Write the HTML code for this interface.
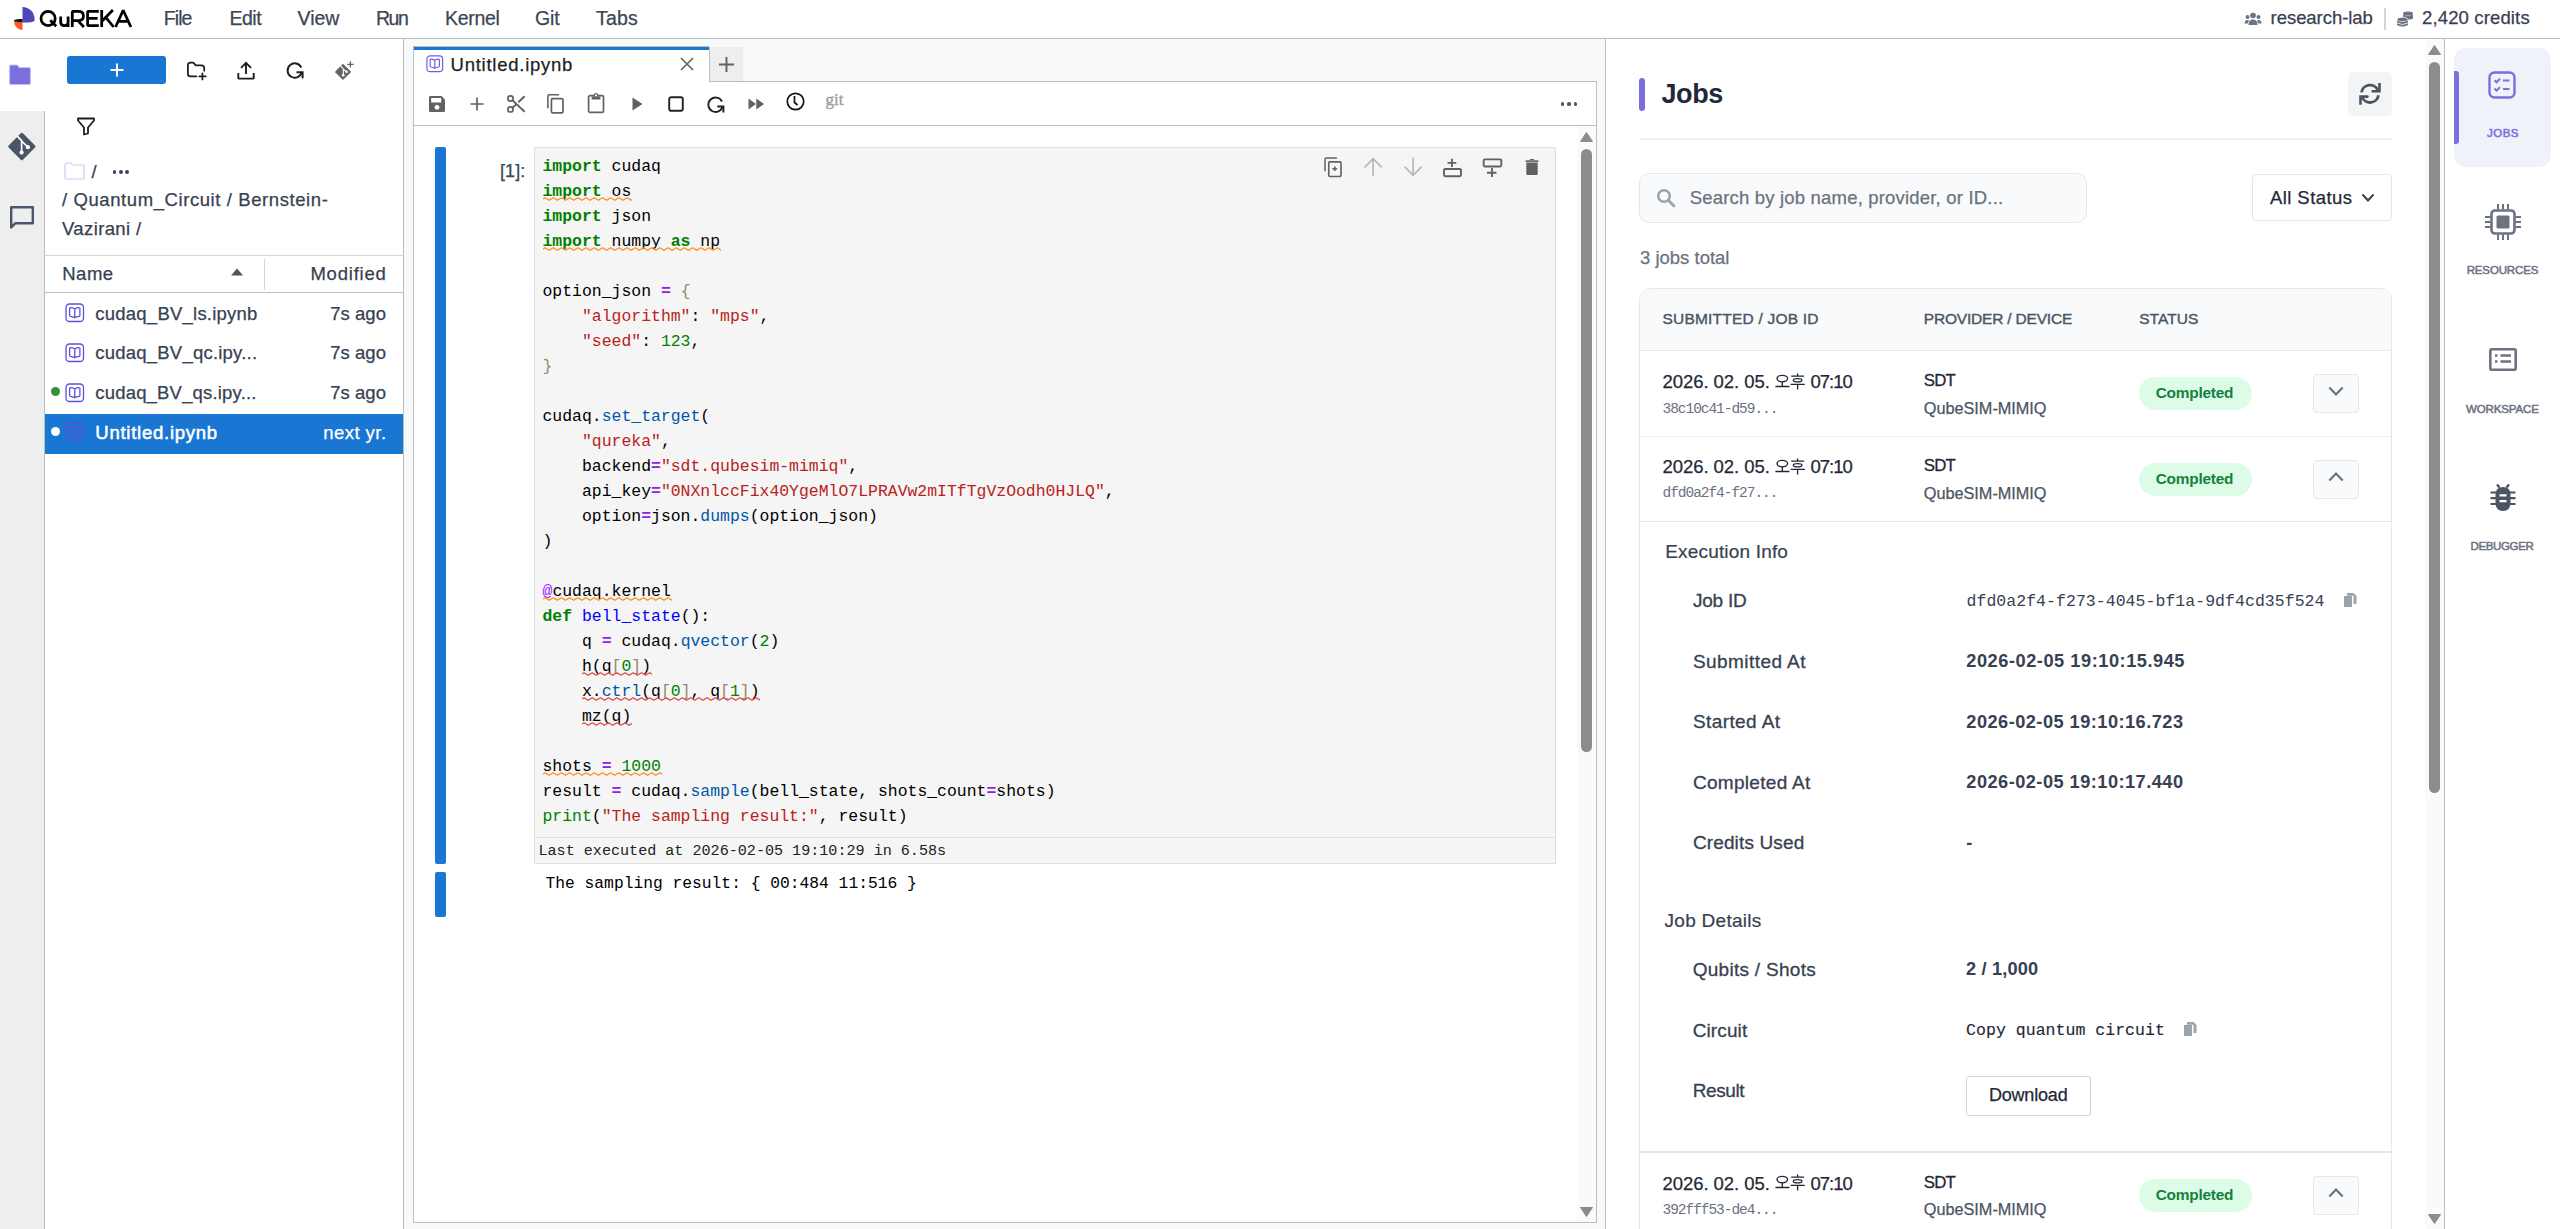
<!DOCTYPE html>
<html><head><meta charset="utf-8"><title>QuREKA</title>
<style>
html,body{margin:0;padding:0;}
body{width:2560px;height:1229px;overflow:hidden;position:relative;background:#fff;font-family:'Liberation Sans', sans-serif;}
.t{position:absolute;white-space:pre;}
.r{position:absolute;box-sizing:border-box;}
svg.r{overflow:visible;}
.ck{color:#008000;font-weight:700} .co{color:#9020e8;font-weight:700} .cs{color:#ba2121} .cn{color:#008000} .cp{color:#0055aa} .cd{color:#0000ff} .cb{color:#998866} .cbi{color:#008000} .cm{color:#aa22ff}
</style></head><body>
<div class="r" style="left:0px;top:38px;width:2560px;height:1px;background:#bdbdbd"></div>
<div class="r" style="left:0px;top:111px;width:44px;height:1118px;background:#eeeeee"></div>
<div class="r" style="left:44px;top:111px;width:1px;height:1118px;background:#bdbdbd"></div>
<div class="r" style="left:403px;top:39px;width:1px;height:1190px;background:#bdbdbd"></div>
<div class="r" style="left:404px;top:39px;width:1201px;height:1190px;background:#f8f9fb"></div>
<div class="r" style="left:413px;top:46px;width:1184px;height:1177px;background:#fff;border:1px solid #bdbdbd;"></div>
<div class="r" style="left:414px;top:47px;width:295px;height:3px;background:#1976d2"></div>
<div class="r" style="left:709px;top:46px;width:888px;height:35px;background:#f8f9fb"></div>
<div class="r" style="left:709px;top:47px;width:34px;height:34px;background:#eeeeee"></div>
<div class="r" style="left:709px;top:47px;width:1px;height:35px;background:#bdbdbd"></div>
<div class="r" style="left:709px;top:81px;width:888px;height:1px;background:#bdbdbd"></div>
<div class="r" style="left:413px;top:125px;width:1184px;height:1px;background:#bdbdbd"></div>
<div class="r" style="left:1596px;top:46px;width:1px;height:35px;background:#f8f9fb"></div>
<div class="r" style="left:1605px;top:39px;width:1px;height:1190px;background:#bdbdbd"></div>
<div class="r" style="left:2444px;top:39px;width:1px;height:1190px;background:#bdbdbd"></div>
<svg class="r" style="left:13px;top:6px;" width="23" height="24" viewBox="0 0 23 24">
<path d="M9.5 1 A12 12 0 0 1 21.5 13 L21.5 15 Q18 17 9.5 16.5 Z" fill="#4f46b8"/>
<path d="M9.5 16.5 L1 15.2 A9 9 0 0 0 9.5 24 Z" fill="#ff5722"/>
<path d="M1 14 Q5 12.5 9.5 13 L9.5 16.5 L1.5 15.5 Z" fill="#111"/>
</svg>
<svg class="r" style="left:0px;top:0px;" width="140" height="38" viewBox="0 0 140 38"><g fill="none" stroke="#000" stroke-width="2.75" stroke-linejoin="bevel">
<circle cx="48.1" cy="18.5" r="7.1"/><path d="M50.3 20.3 L56.2 26.3"/>
<path d="M60.7 16.5 V22.3 Q60.7 25.6 64.4 25.6 Q68.1 25.6 68.1 22.3 M68.1 16.5 V27"/>
<path d="M72.3 27 V11.4 H78.3 Q83.4 11.4 83.4 16 Q83.4 20.6 78.3 20.6 H72.3 M77.8 20.6 L83.9 27"/>
<path d="M98.8 11.4 H87.6 V25.6 H98.8 M87.6 18.4 H97.6"/>
<path d="M101.7 10 V27 M101.9 21.2 L112.9 10 M105.6 17.2 L113.6 27"/>
<path d="M115.6 27 L123.2 10.2 L130.9 27 M118.6 21.4 H127.8"/></g></svg>
<div class="t" style="left:163.75px;top:9.23px;font:400 19.5px/19.5px 'Liberation Sans', sans-serif;color:#3c4654;letter-spacing:-0.917px;;-webkit-text-stroke:0.25px #3c4654">File</div>
<div class="t" style="left:229.50px;top:9.23px;font:400 19.5px/19.5px 'Liberation Sans', sans-serif;color:#3c4654;letter-spacing:-0.5px;;-webkit-text-stroke:0.25px #3c4654">Edit</div>
<div class="t" style="left:297.50px;top:9.23px;font:400 19.5px/19.5px 'Liberation Sans', sans-serif;color:#3c4654;;-webkit-text-stroke:0.25px #3c4654">View</div>
<div class="t" style="left:376.00px;top:9.23px;font:400 19.5px/19.5px 'Liberation Sans', sans-serif;color:#3c4654;letter-spacing:-1.5px;;-webkit-text-stroke:0.25px #3c4654">Run</div>
<div class="t" style="left:445.00px;top:9.23px;font:400 19.5px/19.5px 'Liberation Sans', sans-serif;color:#3c4654;letter-spacing:-0.3px;;-webkit-text-stroke:0.25px #3c4654">Kernel</div>
<div class="t" style="left:535.00px;top:9.23px;font:400 19.5px/19.5px 'Liberation Sans', sans-serif;color:#3c4654;letter-spacing:-0.125px;;-webkit-text-stroke:0.25px #3c4654">Git</div>
<div class="t" style="left:596.00px;top:9.23px;font:400 19.5px/19.5px 'Liberation Sans', sans-serif;color:#3c4654;letter-spacing:0.167px;;-webkit-text-stroke:0.25px #3c4654">Tabs</div>
<div class="t" style="left:2270.60px;top:8.88px;font:400 18.5px/18.5px 'Liberation Sans', sans-serif;color:#374151;letter-spacing:-0.055px;;-webkit-text-stroke:0.25px #374151">research-lab</div>
<div class="r" style="left:2384px;top:8px;width:2px;height:22px;background:#d1d5db"></div>
<div class="t" style="left:2422.00px;top:8.88px;font:400 18.5px/18.5px 'Liberation Sans', sans-serif;color:#374151;letter-spacing:0.142px;;-webkit-text-stroke:0.25px #374151">2,420 credits</div>
<svg class="r" style="left:8px;top:64px;" width="24" height="21" viewBox="0 0 24 21"><path d="M1.5 2.5 Q1.5 1 3 1 L8.5 1 Q9.5 1 10.2 2 L11 3.5 L21 3.5 Q22.5 3.5 22.5 5 L22.5 19 Q22.5 20.5 21 20.5 L3 20.5 Q1.5 20.5 1.5 19 Z" fill="#7b6fe0" stroke="#c7c2f5" stroke-width="1.2"/></svg>
<svg class="r" style="left:7px;top:132px;" width="29" height="29" viewBox="0 0 29 29"><path d="M14.85 2.3 L27 14.5 L14.85 26.7 L2.7 14.5 Z" fill="#4a5568" stroke="#4a5568" stroke-width="3" stroke-linejoin="round"/>
<path d="M10 3.9 L14.6 8.6 V20.5 M14.6 9 L20.9 15.2" stroke="#fff" stroke-width="1.7" fill="none"/>
<circle cx="14.6" cy="20.6" r="2.1" fill="#fff"/><circle cx="20.9" cy="15.2" r="2.1" fill="#fff"/></svg>
<svg class="r" style="left:9px;top:205px;" width="26" height="25" viewBox="0 0 26 25"><path d="M2.2 2.2 L23.8 2.2 L23.8 18.3 L6.2 18.3 L2.2 22.5 Z" fill="none" stroke="#4a5568" stroke-width="2.4" stroke-linejoin="round"/></svg>
<div class="r" style="left:67px;top:56px;width:99px;height:28px;background:#1976d2;border-radius:3px"></div>
<svg class="r" style="left:110px;top:63px;" width="14" height="14" viewBox="0 0 14 14"><path d="M7 0.5 V13.5 M0.5 7 H13.5" stroke="#fff" stroke-width="2"/></svg>
<svg class="r" style="left:183px;top:57px;" width="30" height="28" viewBox="0 0 30 28"><path d="M13.4 19.4 H7.5 Q4.9 19.4 4.9 16.8 V8.3 Q4.9 5.7 7.5 5.7 H10.25 L12.75 8.4 H18.5 Q21.2 8.4 21.2 11 V13.7" fill="none" stroke="#1f1f1f" stroke-width="1.8" stroke-linecap="round" stroke-linejoin="round"/>
<path d="M19.4 16.3 V22.4 M16.3 19.4 H22.7" stroke="#1f1f1f" stroke-width="1.8" stroke-linecap="round"/></svg>
<svg class="r" style="left:237px;top:61px;" width="18" height="19" viewBox="0 0 18 19"><path d="M9 2 V13 M4 6.8 L9 1.8 L14 6.8" fill="none" stroke="#1f1f1f" stroke-width="1.9"/>
<path d="M1.3 12 V17 Q1.3 17.6 2 17.6 H16 Q16.7 17.6 16.7 17 V12" fill="none" stroke="#1f1f1f" stroke-width="1.9"/></svg>
<svg class="r" style="left:286px;top:61px;" width="18" height="19" viewBox="0 0 18 19"><path d="M15.3 6.5 A7.2 7.2 0 1 0 15.8 11" fill="none" stroke="#1f1f1f" stroke-width="1.9"/>
<path d="M10.5 11.3 L16.6 11.3 L16.6 17.2" fill="none" stroke="#1f1f1f" stroke-width="2"/></svg>
<svg class="r" style="left:334px;top:60px;" width="21" height="21" viewBox="0 0 21 21"><path d="M9 4.3 L16.6 11.9 L9 19.5 L1.4 11.9 Z" fill="#616161" stroke="#616161" stroke-width="1" stroke-linejoin="round"/>
<path d="M6.6 5.9 L9.3 8.9 V15 M9.3 9.2 L12.5 11.8" stroke="#fff" stroke-width="1.1" fill="none"/>
<circle cx="9.2" cy="15.2" r="1.35" fill="#fff"/><circle cx="12.5" cy="11.8" r="1.35" fill="#fff"/>
<path d="M16.4 1.2 V7.6 M13.2 4.4 H19.6" stroke="#616161" stroke-width="1.3"/></svg>
<svg class="r" style="left:77px;top:117px;" width="18" height="19" viewBox="0 0 18 19"><path d="M1 1.5 H17 V3.5 L11 10.5 V16.5 L7 17.5 V10.5 L1 3.5 Z" fill="none" stroke="#1f1f1f" stroke-width="1.8" stroke-linejoin="round"/></svg>
<svg class="r" style="left:64px;top:162px;" width="21" height="18" viewBox="0 0 21 18"><path d="M1 2.5 Q1 1 2.5 1 L7 1 L8.5 3 L18.5 3 Q20 3 20 4.5 L20 15.5 Q20 17 18.5 17 L2.5 17 Q1 17 1 15.5 Z" fill="none" stroke="#c9cdf5" stroke-width="1.2"/></svg>
<div class="t" style="left:91.50px;top:163.08px;font:400 18.5px/18.5px 'Liberation Sans', sans-serif;color:#374151;;-webkit-text-stroke:0.25px #374151">/</div>
<div class="r" style="left:112.69999999999999px;top:170.1px;width:3.8px;height:3.8px;background:#3b4656;border-radius:50%"></div>
<div class="r" style="left:119.0px;top:170.1px;width:3.8px;height:3.8px;background:#3b4656;border-radius:50%"></div>
<div class="r" style="left:125.3px;top:170.1px;width:3.8px;height:3.8px;background:#3b4656;border-radius:50%"></div>
<div class="t" style="left:62.00px;top:191.08px;font:400 18.5px/18.5px 'Liberation Sans', sans-serif;color:#374151;letter-spacing:0.586px;;-webkit-text-stroke:0.25px #374151">/ Quantum_Circuit / Bernstein-</div>
<div class="t" style="left:62.00px;top:219.58px;font:400 18.5px/18.5px 'Liberation Sans', sans-serif;color:#374151;letter-spacing:0.378px;;-webkit-text-stroke:0.25px #374151">Vazirani /</div>
<div class="r" style="left:45px;top:255px;width:358px;height:1px;background:#d6d6d6"></div>
<div class="r" style="left:45px;top:292px;width:358px;height:1px;background:#bdbdbd"></div>
<div class="r" style="left:264px;top:259px;width:1px;height:31px;background:#d6d6d6"></div>
<div class="t" style="left:62.30px;top:265.38px;font:400 18.5px/18.5px 'Liberation Sans', sans-serif;color:#374151;letter-spacing:0.467px;;-webkit-text-stroke:0.25px #374151">Name</div>
<svg class="r" style="left:231px;top:268px;" width="12" height="8" viewBox="0 0 12 8"><path d="M0 7.5 L6 0.5 L12 7.5 Z" fill="#555"/></svg>
<div class="t" style="left:310.40px;top:265.38px;font:400 18.5px/18.5px 'Liberation Sans', sans-serif;color:#374151;letter-spacing:0.786px;;-webkit-text-stroke:0.25px #374151">Modified</div>
<div class="r" style="left:45px;top:414px;width:358px;height:40px;background:#1976d2"></div>
<svg class="r" style="left:65px;top:303px;" width="20" height="20" viewBox="0 0 20 20"><rect x="1" y="1" width="17.5" height="17.5" rx="3.5" fill="none" stroke="#5b4fd9" stroke-width="1.3"/>
<path d="M4.6 5.5 Q4.6 4.6 5.6 4.6 Q7.6 4.6 9.75 5.8 Q11.9 4.6 13.9 4.6 Q14.9 4.6 14.9 5.5 V12.2 Q14.9 13.1 13.9 13.3 Q11.8 13.6 9.75 14.8 Q7.7 13.6 5.6 13.3 Q4.6 13.1 4.6 12.2 Z M9.75 5.8 V14.6" fill="none" stroke="#5b4fd9" stroke-width="1.3" stroke-linejoin="round"/></svg>
<div class="t" style="left:95.30px;top:305.38px;font:400 18.5px/18.5px 'Liberation Sans', sans-serif;color:#374151;letter-spacing:0.231px;;-webkit-text-stroke:0.25px #374151">cudaq_BV_ls.ipynb</div>
<div class="t" style="left:330.20px;top:305.38px;font:400 18.5px/18.5px 'Liberation Sans', sans-serif;color:#374151;letter-spacing:0.04px;;-webkit-text-stroke:0.25px #374151">7s ago</div>
<svg class="r" style="left:65px;top:343px;" width="20" height="20" viewBox="0 0 20 20"><rect x="1" y="1" width="17.5" height="17.5" rx="3.5" fill="none" stroke="#5b4fd9" stroke-width="1.3"/>
<path d="M4.6 5.5 Q4.6 4.6 5.6 4.6 Q7.6 4.6 9.75 5.8 Q11.9 4.6 13.9 4.6 Q14.9 4.6 14.9 5.5 V12.2 Q14.9 13.1 13.9 13.3 Q11.8 13.6 9.75 14.8 Q7.7 13.6 5.6 13.3 Q4.6 13.1 4.6 12.2 Z M9.75 5.8 V14.6" fill="none" stroke="#5b4fd9" stroke-width="1.3" stroke-linejoin="round"/></svg>
<div class="t" style="left:95.30px;top:344.47px;font:400 18.5px/18.5px 'Liberation Sans', sans-serif;color:#374151;letter-spacing:0.218px;;-webkit-text-stroke:0.25px #374151">cudaq_BV_qc.ipy...</div>
<div class="t" style="left:330.20px;top:344.47px;font:400 18.5px/18.5px 'Liberation Sans', sans-serif;color:#374151;letter-spacing:0.04px;;-webkit-text-stroke:0.25px #374151">7s ago</div>
<svg class="r" style="left:65px;top:383px;" width="20" height="20" viewBox="0 0 20 20"><rect x="1" y="1" width="17.5" height="17.5" rx="3.5" fill="none" stroke="#5b4fd9" stroke-width="1.3"/>
<path d="M4.6 5.5 Q4.6 4.6 5.6 4.6 Q7.6 4.6 9.75 5.8 Q11.9 4.6 13.9 4.6 Q14.9 4.6 14.9 5.5 V12.2 Q14.9 13.1 13.9 13.3 Q11.8 13.6 9.75 14.8 Q7.7 13.6 5.6 13.3 Q4.6 13.1 4.6 12.2 Z M9.75 5.8 V14.6" fill="none" stroke="#5b4fd9" stroke-width="1.3" stroke-linejoin="round"/></svg>
<div class="r" style="left:51px;top:386.5px;width:9px;height:9px;background:#388e3c;border-radius:50%"></div>
<div class="t" style="left:95.30px;top:384.07px;font:400 18.5px/18.5px 'Liberation Sans', sans-serif;color:#374151;letter-spacing:0.182px;;-webkit-text-stroke:0.25px #374151">cudaq_BV_qs.ipy...</div>
<div class="t" style="left:330.20px;top:384.07px;font:400 18.5px/18.5px 'Liberation Sans', sans-serif;color:#374151;letter-spacing:0.04px;;-webkit-text-stroke:0.25px #374151">7s ago</div>
<svg class="r" style="left:65px;top:422px;" width="20" height="20" viewBox="0 0 20 20"><rect x="1" y="1" width="17.5" height="17.5" rx="3.5" fill="none" stroke="#5b4fd9" stroke-width="1.3"/>
<path d="M4.6 5.5 Q4.6 4.6 5.6 4.6 Q7.6 4.6 9.75 5.8 Q11.9 4.6 13.9 4.6 Q14.9 4.6 14.9 5.5 V12.2 Q14.9 13.1 13.9 13.3 Q11.8 13.6 9.75 14.8 Q7.7 13.6 5.6 13.3 Q4.6 13.1 4.6 12.2 Z M9.75 5.8 V14.6" fill="none" stroke="#5b4fd9" stroke-width="1.3" stroke-linejoin="round"/></svg>
<div class="r" style="left:51px;top:427.2px;width:9px;height:9px;background:#fff;border-radius:50%"></div>
<div class="t" style="left:95.30px;top:423.77px;font:400 18.5px/18.5px 'Liberation Sans', sans-serif;color:#fff;letter-spacing:0.746px;-webkit-text-stroke:0.55px #fff">Untitled.ipynb</div>
<div class="t" style="left:323.20px;top:423.77px;font:400 18.5px/18.5px 'Liberation Sans', sans-serif;color:#fff;letter-spacing:0.457px;;-webkit-text-stroke:0.25px #fff">next yr.</div>
<svg class="r" style="left:425.5px;top:54.5px;transform:scale(0.9);transform-origin:0 0" width="20" height="20" viewBox="0 0 20 20"><rect x="1" y="1" width="17.5" height="17.5" rx="3.5" fill="none" stroke="#6a5fe0" stroke-width="1.3"/>
<path d="M4.6 5.5 Q4.6 4.6 5.6 4.6 Q7.6 4.6 9.75 5.8 Q11.9 4.6 13.9 4.6 Q14.9 4.6 14.9 5.5 V12.2 Q14.9 13.1 13.9 13.3 Q11.8 13.6 9.75 14.8 Q7.7 13.6 5.6 13.3 Q4.6 13.1 4.6 12.2 Z M9.75 5.8 V14.6" fill="none" stroke="#6a5fe0" stroke-width="1.3" stroke-linejoin="round"/></svg>
<div class="t" style="left:450.60px;top:55.57px;font:400 18.5px/18.5px 'Liberation Sans', sans-serif;color:#1f1f1f;letter-spacing:0.746px;;-webkit-text-stroke:0.25px #1f1f1f">Untitled.ipynb</div>
<svg class="r" style="left:680px;top:57px;" width="14" height="14" viewBox="0 0 14 14"><path d="M1 1 L13 13 M13 1 L1 13" stroke="#616161" stroke-width="1.6"/></svg>
<svg class="r" style="left:718px;top:56px;" width="18" height="18" viewBox="0 0 18 18"><path d="M8.5 1 V16 M1 8.5 H16" stroke="#616161" stroke-width="1.9"/></svg>
<svg class="r" style="left:428px;top:95px;" width="18" height="18" viewBox="0 0 18 18"><path d="M1 2.2 Q1 1 2.2 1 L13.5 1 L17 4.5 L17 15.8 Q17 17 15.8 17 L2.2 17 Q1 17 1 15.8 Z" fill="#616161"/><rect x="3.2" y="3" width="10" height="4.5" fill="#fff"/><circle cx="9" cy="12.3" r="2.4" fill="#fff"/></svg>
<svg class="r" style="left:470px;top:97px;" width="14" height="14" viewBox="0 0 14 14"><path d="M7 0.5 V13.5 M0.5 7 H13.5" stroke="#616161" stroke-width="1.7"/></svg>
<svg class="r" style="left:500px;top:88px;" width="30" height="30" viewBox="0 0 30 30"><circle cx="10.5" cy="10.5" r="2.6" fill="none" stroke="#616161" stroke-width="1.7"/><circle cx="10.5" cy="21.4" r="2.6" fill="none" stroke="#616161" stroke-width="1.7"/><path d="M12.6 12.4 L24.6 23.8 M24.6 8.2 L18.3 14.3 M16.2 16.4 L12.6 19.6" stroke="#616161" stroke-width="1.9"/></svg>
<svg class="r" style="left:540px;top:88px;" width="30" height="30" viewBox="0 0 30 30"><path d="M7.9 20.2 V8.2 Q7.9 6.8 9.3 6.8 H19" fill="none" stroke="#616161" stroke-width="1.6"/><rect x="11.4" y="10.6" width="11.6" height="14.3" rx="1.4" fill="none" stroke="#616161" stroke-width="1.7"/></svg>
<svg class="r" style="left:587px;top:93px;" width="18" height="22" viewBox="0 0 18 22"><rect x="1.6" y="2.7" width="14.9" height="16.6" rx="1.4" fill="none" stroke="#616161" stroke-width="1.7"/><path d="M4.6 3.5 H13.4 V6.5 H4.6 Z" fill="#616161"/><circle cx="9" cy="2.4" r="1.7" fill="#fff" stroke="#616161" stroke-width="1.3"/></svg>
<svg class="r" style="left:632px;top:97px;" width="11" height="14" viewBox="0 0 11 14"><path d="M0.5 0.5 L10.5 7 L0.5 13.5 Z" fill="#616161"/></svg>
<svg class="r" style="left:668px;top:96px;" width="16" height="16" viewBox="0 0 16 16"><rect x="1.2" y="1.2" width="13.6" height="13.6" rx="2" fill="none" stroke="#222" stroke-width="1.9"/></svg>
<svg class="r" style="left:707px;top:95px;" width="18" height="19" viewBox="0 0 18 19"><path d="M15 6.5 A7.2 7.2 0 1 0 15.6 11.3" fill="none" stroke="#222" stroke-width="1.9"/><path d="M10.3 11.5 L16.4 11.5 L16.4 17.5" fill="none" stroke="#222" stroke-width="2"/></svg>
<svg class="r" style="left:748px;top:98px;" width="17" height="12" viewBox="0 0 17 12"><path d="M0.5 0.5 L8 6 L0.5 11.5 Z M8.3 0.5 L16 6 L8.3 11.5 Z" fill="#616161"/></svg>
<svg class="r" style="left:786px;top:92px;" width="19" height="19" viewBox="0 0 19 19"><circle cx="9.5" cy="9.5" r="8.2" fill="none" stroke="#111" stroke-width="1.7"/><path d="M8.5 4 V10.5 L11.5 13" fill="none" stroke="#111" stroke-width="1.7"/></svg>
<div class="t" style="left:825.50px;top:90.87px;font:400 17px/17px 'Liberation Serif', serif;color:#9e9e9e;-webkit-text-stroke:0.4px #9e9e9e">git</div>
<div class="r" style="left:1560.65px;top:102.25px;width:3.7px;height:3.7px;background:#555;border-radius:50%"></div>
<div class="r" style="left:1567.15px;top:102.25px;width:3.7px;height:3.7px;background:#555;border-radius:50%"></div>
<div class="r" style="left:1573.5500000000002px;top:102.25px;width:3.7px;height:3.7px;background:#555;border-radius:50%"></div>
<div class="r" style="left:435px;top:147px;width:11px;height:717px;background:#1976d2;border-radius:2px"></div>
<div class="r" style="left:435px;top:872px;width:11px;height:45px;background:#1976d2;border-radius:2px"></div>
<div class="t" style="left:500.00px;top:161.50px;font:400 18px/18px 'Liberation Sans', sans-serif;color:#3b4656;letter-spacing:0.1px;;-webkit-text-stroke:0.25px #3b4656">[1]:</div>
<div class="r" style="left:534px;top:147px;width:1022px;height:717px;background:#f5f5f5;border:1px solid #e0e0e0"></div>
<div class="r" style="left:535px;top:837px;width:1020px;height:1px;background:#e0e0e0"></div>
<svg class="r" style="left:1323px;top:156px;" width="20" height="22" viewBox="0 0 20 22"><path d="M2 15.2 V3.2 Q2 2 3.2 2 H13.9" fill="none" stroke="#616161" stroke-width="1.5"/><rect x="5.75" y="5.9" width="12.25" height="14.6" rx="1.2" fill="none" stroke="#616161" stroke-width="1.6"/><path d="M11.75 10.4 V15.1 M9.4 12.75 H14.1" stroke="#616161" stroke-width="1.6"/></svg>
<svg class="r" style="left:1363px;top:157px;" width="20" height="20" viewBox="0 0 20 20"><path d="M10.1 19.3 V1.8 M1.5 10.3 L10.1 1.6 L18.7 10.3" fill="none" stroke="#b8b8b8" stroke-width="1.7"/></svg>
<svg class="r" style="left:1403px;top:157px;" width="20" height="20" viewBox="0 0 20 20"><path d="M10.1 0.7 V18.2 M1.5 9.7 L10.1 18.4 L18.7 9.7" fill="none" stroke="#b8b8b8" stroke-width="1.7"/></svg>
<svg class="r" style="left:1442px;top:157px;" width="20" height="21" viewBox="0 0 20 21"><rect x="2" y="12" width="17" height="7.3" rx="1.2" fill="none" stroke="#616161" stroke-width="1.9"/><path d="M9.9 1.7 V10 M5.5 5.9 H14.3" stroke="#616161" stroke-width="1.9"/></svg>
<svg class="r" style="left:1482px;top:157px;" width="20" height="21" viewBox="0 0 20 21"><rect x="1.7" y="2.4" width="17.6" height="7.1" rx="1.2" fill="none" stroke="#616161" stroke-width="1.9"/><path d="M10 11 V19.9 M5 15.75 H14.5" stroke="#616161" stroke-width="1.9"/></svg>
<svg class="r" style="left:1525px;top:158px;" width="14" height="18" viewBox="0 0 14 18"><path d="M0.6 2.3 H13.4 V3.9 H0.6 Z" fill="#616161"/><path d="M4.6 2.3 Q4.6 0.9 6 0.9 H8 Q9.4 0.9 9.4 2.3" fill="#616161"/><path d="M1.3 4.5 H12.7 V15.8 Q12.7 17 11.5 17 H2.5 Q1.3 17 1.3 15.8 Z" fill="#616161"/></svg>
<div class="r" style="left:1577px;top:126px;width:19px;height:1096px;background:#fafafa"></div>
<svg class="r" style="left:1580px;top:132px;" width="13" height="10" viewBox="0 0 13 10"><path d="M6.5 0.5 L12.5 9.5 H0.5 Z" fill="#8c8c8c" stroke="#8c8c8c" stroke-width="1" stroke-linejoin="round"/></svg>
<div class="r" style="left:1581px;top:148.5px;width:11px;height:603.5px;background:#8c8c8c;border-radius:6px"></div>
<svg class="r" style="left:1580px;top:1207px;" width="13" height="10" viewBox="0 0 13 10"><path d="M6.5 9.5 L12.5 0.5 H0.5 Z" fill="#8c8c8c" stroke="#8c8c8c" stroke-width="1" stroke-linejoin="round"/></svg>
<div class="t code" style="left:542.5px;top:153.82px;font:400 16.45px/25px 'Liberation Mono', monospace;color:#000"><span class="ck">import</span> cudaq
<span class="ck">import</span> os
<span class="ck">import</span> json
<span class="ck">import</span> numpy <span class="ck">as</span> np

option_json <span class="co">=</span> <span class="cb">{</span>
    <span class="cs">&quot;algorithm&quot;</span>: <span class="cs">&quot;mps&quot;</span>,
    <span class="cs">&quot;seed&quot;</span>: <span class="cn">123</span>,
<span class="cb">}</span>

cudaq.<span class="cp">set_target</span>(
    <span class="cs">&quot;qureka&quot;</span>,
    backend<span class="co">=</span><span class="cs">&quot;sdt.qubesim-mimiq&quot;</span>,
    api_key<span class="co">=</span><span class="cs">&quot;0NXnlccFix40YgeMlO7LPRAVw2mITfTgVzOodh0HJLQ&quot;</span>,
    option<span class="co">=</span>json.<span class="cp">dumps</span>(option_json)
)

<span class="cm">@</span>cudaq.kernel
<span class="ck">def</span> <span class="cd">bell_state</span>():
    q <span class="co">=</span> cudaq.<span class="cp">qvector</span>(<span class="cn">2</span>)
    h(q<span class="cb">[</span><span class="cn">0</span><span class="cb">]</span>)
    x.<span class="cp">ctrl</span>(q<span class="cb">[</span><span class="cn">0</span><span class="cb">]</span>, q<span class="cb">[</span><span class="cn">1</span><span class="cb">]</span>)
    mz(q)

shots <span class="co">=</span> <span class="cn">1000</span>
result <span class="co">=</span> cudaq.<span class="cp">sample</span>(bell_state, shots_count<span class="co">=</span>shots)
<span class="cbi">print</span>(<span class="cs">&quot;The sampling result:&quot;</span>, result)</div>
<svg class="r" style="left:542.5px;top:197.2px;overflow:hidden" width="89" height="5" viewBox="0 0 89 5"><polyline points="0.00,2.05 2.05,0.8 4.10,2.05 6.15,3.3 8.20,2.05 10.25,0.8 12.30,2.05 14.35,3.3 16.40,2.05 18.45,0.8 20.50,2.05 22.55,3.3 24.60,2.05 26.65,0.8 28.70,2.05 30.75,3.3 32.80,2.05 34.85,0.8 36.90,2.05 38.95,3.3 41.00,2.05 43.05,0.8 45.10,2.05 47.15,3.3 49.20,2.05 51.25,0.8 53.30,2.05 55.35,3.3 57.40,2.05 59.45,0.8 61.50,2.05 63.55,3.3 65.60,2.05 67.65,0.8 69.70,2.05 71.75,3.3 73.80,2.05 75.85,0.8 77.90,2.05 79.95,3.3 82.00,2.05 84.05,0.8 86.10,2.05 88.15,3.3 90.20,2.05" fill="none" stroke="#ff8c1a" stroke-width="1.3" stroke-linejoin="round"/></svg>
<svg class="r" style="left:542.5px;top:247.2px;overflow:hidden" width="178" height="5" viewBox="0 0 178 5"><polyline points="0.00,2.05 2.05,0.8 4.10,2.05 6.15,3.3 8.20,2.05 10.25,0.8 12.30,2.05 14.35,3.3 16.40,2.05 18.45,0.8 20.50,2.05 22.55,3.3 24.60,2.05 26.65,0.8 28.70,2.05 30.75,3.3 32.80,2.05 34.85,0.8 36.90,2.05 38.95,3.3 41.00,2.05 43.05,0.8 45.10,2.05 47.15,3.3 49.20,2.05 51.25,0.8 53.30,2.05 55.35,3.3 57.40,2.05 59.45,0.8 61.50,2.05 63.55,3.3 65.60,2.05 67.65,0.8 69.70,2.05 71.75,3.3 73.80,2.05 75.85,0.8 77.90,2.05 79.95,3.3 82.00,2.05 84.05,0.8 86.10,2.05 88.15,3.3 90.20,2.05 92.25,0.8 94.30,2.05 96.35,3.3 98.40,2.05 100.45,0.8 102.50,2.05 104.55,3.3 106.60,2.05 108.65,0.8 110.70,2.05 112.75,3.3 114.80,2.05 116.85,0.8 118.90,2.05 120.95,3.3 123.00,2.05 125.05,0.8 127.10,2.05 129.15,3.3 131.20,2.05 133.25,0.8 135.30,2.05 137.35,3.3 139.40,2.05 141.45,0.8 143.50,2.05 145.55,3.3 147.60,2.05 149.65,0.8 151.70,2.05 153.75,3.3 155.80,2.05 157.85,0.8 159.90,2.05 161.95,3.3 164.00,2.05 166.05,0.8 168.10,2.05 170.15,3.3 172.20,2.05 174.25,0.8 176.30,2.05 178.35,3.3 180.40,2.05" fill="none" stroke="#ff8c1a" stroke-width="1.3" stroke-linejoin="round"/></svg>
<svg class="r" style="left:542.5px;top:597.2px;overflow:hidden" width="129" height="5" viewBox="0 0 129 5"><polyline points="0.00,2.05 2.05,0.8 4.10,2.05 6.15,3.3 8.20,2.05 10.25,0.8 12.30,2.05 14.35,3.3 16.40,2.05 18.45,0.8 20.50,2.05 22.55,3.3 24.60,2.05 26.65,0.8 28.70,2.05 30.75,3.3 32.80,2.05 34.85,0.8 36.90,2.05 38.95,3.3 41.00,2.05 43.05,0.8 45.10,2.05 47.15,3.3 49.20,2.05 51.25,0.8 53.30,2.05 55.35,3.3 57.40,2.05 59.45,0.8 61.50,2.05 63.55,3.3 65.60,2.05 67.65,0.8 69.70,2.05 71.75,3.3 73.80,2.05 75.85,0.8 77.90,2.05 79.95,3.3 82.00,2.05 84.05,0.8 86.10,2.05 88.15,3.3 90.20,2.05 92.25,0.8 94.30,2.05 96.35,3.3 98.40,2.05 100.45,0.8 102.50,2.05 104.55,3.3 106.60,2.05 108.65,0.8 110.70,2.05 112.75,3.3 114.80,2.05 116.85,0.8 118.90,2.05 120.95,3.3 123.00,2.05 125.05,0.8 127.10,2.05 129.15,3.3 131.20,2.05" fill="none" stroke="#ff8c1a" stroke-width="1.3" stroke-linejoin="round"/></svg>
<svg class="r" style="left:542.5px;top:772.2px;overflow:hidden" width="119" height="5" viewBox="0 0 119 5"><polyline points="0.00,2.05 2.05,0.8 4.10,2.05 6.15,3.3 8.20,2.05 10.25,0.8 12.30,2.05 14.35,3.3 16.40,2.05 18.45,0.8 20.50,2.05 22.55,3.3 24.60,2.05 26.65,0.8 28.70,2.05 30.75,3.3 32.80,2.05 34.85,0.8 36.90,2.05 38.95,3.3 41.00,2.05 43.05,0.8 45.10,2.05 47.15,3.3 49.20,2.05 51.25,0.8 53.30,2.05 55.35,3.3 57.40,2.05 59.45,0.8 61.50,2.05 63.55,3.3 65.60,2.05 67.65,0.8 69.70,2.05 71.75,3.3 73.80,2.05 75.85,0.8 77.90,2.05 79.95,3.3 82.00,2.05 84.05,0.8 86.10,2.05 88.15,3.3 90.20,2.05 92.25,0.8 94.30,2.05 96.35,3.3 98.40,2.05 100.45,0.8 102.50,2.05 104.55,3.3 106.60,2.05 108.65,0.8 110.70,2.05 112.75,3.3 114.80,2.05 116.85,0.8 118.90,2.05 120.95,3.3 123.00,2.05" fill="none" stroke="#ff8c1a" stroke-width="1.3" stroke-linejoin="round"/></svg>
<svg class="r" style="left:582.0px;top:672.2px;overflow:hidden" width="70" height="5" viewBox="0 0 70 5"><polyline points="0.00,2.05 2.05,0.8 4.10,2.05 6.15,3.3 8.20,2.05 10.25,0.8 12.30,2.05 14.35,3.3 16.40,2.05 18.45,0.8 20.50,2.05 22.55,3.3 24.60,2.05 26.65,0.8 28.70,2.05 30.75,3.3 32.80,2.05 34.85,0.8 36.90,2.05 38.95,3.3 41.00,2.05 43.05,0.8 45.10,2.05 47.15,3.3 49.20,2.05 51.25,0.8 53.30,2.05 55.35,3.3 57.40,2.05 59.45,0.8 61.50,2.05 63.55,3.3 65.60,2.05 67.65,0.8 69.70,2.05 71.75,3.3 73.80,2.05" fill="none" stroke="#e04848" stroke-width="1.3" stroke-linejoin="round"/></svg>
<svg class="r" style="left:582.0px;top:697.2px;overflow:hidden" width="178" height="5" viewBox="0 0 178 5"><polyline points="0.00,2.05 2.05,0.8 4.10,2.05 6.15,3.3 8.20,2.05 10.25,0.8 12.30,2.05 14.35,3.3 16.40,2.05 18.45,0.8 20.50,2.05 22.55,3.3 24.60,2.05 26.65,0.8 28.70,2.05 30.75,3.3 32.80,2.05 34.85,0.8 36.90,2.05 38.95,3.3 41.00,2.05 43.05,0.8 45.10,2.05 47.15,3.3 49.20,2.05 51.25,0.8 53.30,2.05 55.35,3.3 57.40,2.05 59.45,0.8 61.50,2.05 63.55,3.3 65.60,2.05 67.65,0.8 69.70,2.05 71.75,3.3 73.80,2.05 75.85,0.8 77.90,2.05 79.95,3.3 82.00,2.05 84.05,0.8 86.10,2.05 88.15,3.3 90.20,2.05 92.25,0.8 94.30,2.05 96.35,3.3 98.40,2.05 100.45,0.8 102.50,2.05 104.55,3.3 106.60,2.05 108.65,0.8 110.70,2.05 112.75,3.3 114.80,2.05 116.85,0.8 118.90,2.05 120.95,3.3 123.00,2.05 125.05,0.8 127.10,2.05 129.15,3.3 131.20,2.05 133.25,0.8 135.30,2.05 137.35,3.3 139.40,2.05 141.45,0.8 143.50,2.05 145.55,3.3 147.60,2.05 149.65,0.8 151.70,2.05 153.75,3.3 155.80,2.05 157.85,0.8 159.90,2.05 161.95,3.3 164.00,2.05 166.05,0.8 168.10,2.05 170.15,3.3 172.20,2.05 174.25,0.8 176.30,2.05 178.35,3.3 180.40,2.05" fill="none" stroke="#e04848" stroke-width="1.3" stroke-linejoin="round"/></svg>
<svg class="r" style="left:582.0px;top:722.2px;overflow:hidden" width="50" height="5" viewBox="0 0 50 5"><polyline points="0.00,2.05 2.05,0.8 4.10,2.05 6.15,3.3 8.20,2.05 10.25,0.8 12.30,2.05 14.35,3.3 16.40,2.05 18.45,0.8 20.50,2.05 22.55,3.3 24.60,2.05 26.65,0.8 28.70,2.05 30.75,3.3 32.80,2.05 34.85,0.8 36.90,2.05 38.95,3.3 41.00,2.05 43.05,0.8 45.10,2.05 47.15,3.3 49.20,2.05 51.25,0.8 53.30,2.05 55.35,3.3 57.40,2.05" fill="none" stroke="#e04848" stroke-width="1.3" stroke-linejoin="round"/></svg>
<div class="t" style="left:538.50px;top:844.22px;font:400 15.1px/15.1px 'Liberation Mono', monospace;color:#212121;">Last executed at 2026-02-05 19:10:29 in 6.58s</div>
<div class="t" style="left:545.50px;top:876.41px;font:400 16.3px/16.3px 'Liberation Mono', monospace;color:#000;">The sampling result: { 00:484 11:516 }</div>
<div class="r" style="left:1639px;top:78px;width:6px;height:33px;background:#7b6fe0;border-radius:3px"></div>
<div class="t" style="left:1661.50px;top:80.75px;font:700 27px/27px 'Liberation Sans', sans-serif;color:#1f2937;letter-spacing:-0.4px;">Jobs</div>
<div class="r" style="left:2348px;top:72px;width:44px;height:44px;background:#f3f4f6;border-radius:5px"></div>
<svg class="r" style="left:2358px;top:82px;" width="24" height="24" viewBox="0 0 24 24"><path d="M3.5 10.4 A8.6 8.6 0 0 1 19.9 8.3" fill="none" stroke="#4b5563" stroke-width="2.8"/>
<path d="M20.2 1 H22.8 V10.6 H13.8 Q12.8 9.35 13.8 8.1 H20.2 Z" fill="#4b5563"/>
<path d="M20.5 13.2 A8.6 8.6 0 0 1 4.1 15.3" fill="none" stroke="#4b5563" stroke-width="2.8"/>
<path d="M1.2 13.3 H10.2 Q11.2 14.6 10.2 15.9 H3.8 V22.8 H1.2 Z" fill="#4b5563"/></svg>
<div class="r" style="left:1639px;top:138px;width:753px;height:2px;background:#eef0f3"></div>
<div class="r" style="left:1639px;top:173px;width:448px;height:50px;background:#f9fafb;border:1px solid #e5e7eb;border-radius:10px"></div>
<svg class="r" style="left:1656px;top:188px;" width="21" height="20" viewBox="0 0 21 20"><circle cx="8" cy="8" r="5.8" fill="none" stroke="#9ca3af" stroke-width="2.6"/><path d="M12.3 12.3 L18 18" stroke="#9ca3af" stroke-width="2.8" stroke-linecap="round"/></svg>
<div class="t" style="left:1689.70px;top:189.08px;font:400 18.5px/18.5px 'Liberation Sans', sans-serif;color:#6b7280;letter-spacing:0.189px;;-webkit-text-stroke:0.25px #6b7280">Search by job name, provider, or ID...</div>
<div class="r" style="left:2252px;top:174px;width:140px;height:47px;background:#fff;border:1.5px solid #e5e7eb;border-radius:4px"></div>
<div class="t" style="left:2269.90px;top:189.08px;font:400 18.5px/18.5px 'Liberation Sans', sans-serif;color:#1f2937;letter-spacing:0.444px;;-webkit-text-stroke:0.25px #1f2937">All Status</div>
<svg class="r" style="left:2361px;top:193px;" width="14" height="10" viewBox="0 0 14 10"><path d="M1.5 1.5 L7 7.5 L12.5 1.5" fill="none" stroke="#374151" stroke-width="2"/></svg>
<div class="t" style="left:1640.00px;top:249.18px;font:400 18.5px/18.5px 'Liberation Sans', sans-serif;color:#6b7280;;-webkit-text-stroke:0.25px #6b7280">3 jobs total</div>
<div class="r" style="left:1639px;top:288px;width:753px;height:960px;background:#fff;border:1px solid #e5e7eb;border-radius:12px"></div>
<div class="r" style="left:1640px;top:289px;width:751px;height:61px;background:#f9fafb;border-radius:11px 11px 0 0"></div>
<div class="r" style="left:1640px;top:350px;width:751px;height:1px;background:#e5e7eb"></div>
<div class="t" style="left:1662.50px;top:311.43px;font:400 15.5px/15.5px 'Liberation Sans', sans-serif;color:#4b5563;letter-spacing:0.206px;-webkit-text-stroke:0.4px #4b5563">SUBMITTED / JOB ID</div>
<div class="t" style="left:1923.80px;top:311.43px;font:400 15.5px/15.5px 'Liberation Sans', sans-serif;color:#4b5563;letter-spacing:-0.194px;-webkit-text-stroke:0.4px #4b5563">PROVIDER / DEVICE</div>
<div class="t" style="left:2139.20px;top:311.43px;font:400 15.5px/15.5px 'Liberation Sans', sans-serif;color:#4b5563;letter-spacing:0.04px;-webkit-text-stroke:0.4px #4b5563">STATUS</div>
<div class="t" style="left:1662.50px;top:373.38px;font:400 18.5px/18.5px 'Liberation Sans', sans-serif;color:#1f2937;letter-spacing:-0.058px;-webkit-text-stroke:0.25px #1f2937">2026. 02. 05.</div>
<svg class="r" style="left:1775.2px;top:372.0px;" width="32" height="19" viewBox="0 0 32 19"><g fill="none" stroke="#1f2937" stroke-width="1.35">
<ellipse cx="7.3" cy="6.6" rx="5.3" ry="3.2"/><path d="M7.3 9.8 V14.5 M0.4 14.5 H14.5"/>
<path d="M22.6 1.6 V4 M16.2 4.1 H29.1 M15.6 12.3 H29.8 M22.6 12.3 V17.5"/><ellipse cx="22.6" cy="8.2" rx="4.3" ry="1.6"/></g></svg>
<div class="t" style="left:1810.40px;top:373.38px;font:400 18.5px/18.5px 'Liberation Sans', sans-serif;color:#1f2937;letter-spacing:-0.95px;-webkit-text-stroke:0.25px #1f2937">07:10</div>
<div class="t" style="left:1662.50px;top:401.78px;font:400 14.5px/14.5px 'Liberation Mono', monospace;color:#6b7280;letter-spacing:-1.043px;">38c10c41-d59...</div>
<div class="t" style="left:1923.80px;top:373.32px;font:400 16.8px/16.8px 'Liberation Sans', sans-serif;color:#1f2937;letter-spacing:-0.75px;-webkit-text-stroke:0.3px #1f2937">SDT</div>
<div class="t" style="left:1923.80px;top:399.94px;font:400 16.3px/16.3px 'Liberation Sans', sans-serif;color:#4b5563;letter-spacing:-0.025px;;-webkit-text-stroke:0.25px #4b5563">QubeSIM-MIMIQ</div>
<div class="r" style="left:2139px;top:377px;width:113px;height:33px;background:#dcfce7;border-radius:17px"></div>
<div class="t" style="left:2155.70px;top:385.31px;font:700 15.4px/15.4px 'Liberation Sans', sans-serif;color:#15803d;letter-spacing:-0.225px;">Completed</div>
<div class="r" style="left:2313px;top:374px;width:46px;height:39px;background:#f9fafb;border:1px solid #e5e7eb;border-radius:4px"></div>
<svg class="r" style="left:2328px;top:386px;" width="16" height="10" viewBox="0 0 16 10"><path d="M1.3 1.5 L8 8.5 L14.7 1.5" fill="none" stroke="#6b7280" stroke-width="2.2"/></svg>
<div class="r" style="left:1640px;top:436px;width:751px;height:1px;background:#eceef2"></div>
<div class="t" style="left:1662.50px;top:458.07px;font:400 18.5px/18.5px 'Liberation Sans', sans-serif;color:#1f2937;letter-spacing:-0.058px;-webkit-text-stroke:0.25px #1f2937">2026. 02. 05.</div>
<svg class="r" style="left:1775.2px;top:456.7px;" width="32" height="19" viewBox="0 0 32 19"><g fill="none" stroke="#1f2937" stroke-width="1.35">
<ellipse cx="7.3" cy="6.6" rx="5.3" ry="3.2"/><path d="M7.3 9.8 V14.5 M0.4 14.5 H14.5"/>
<path d="M22.6 1.6 V4 M16.2 4.1 H29.1 M15.6 12.3 H29.8 M22.6 12.3 V17.5"/><ellipse cx="22.6" cy="8.2" rx="4.3" ry="1.6"/></g></svg>
<div class="t" style="left:1810.40px;top:458.07px;font:400 18.5px/18.5px 'Liberation Sans', sans-serif;color:#1f2937;letter-spacing:-0.95px;-webkit-text-stroke:0.25px #1f2937">07:10</div>
<div class="t" style="left:1662.50px;top:486.48px;font:400 14.5px/14.5px 'Liberation Mono', monospace;color:#6b7280;letter-spacing:-1.043px;">dfd0a2f4-f27...</div>
<div class="t" style="left:1923.80px;top:458.02px;font:400 16.8px/16.8px 'Liberation Sans', sans-serif;color:#1f2937;letter-spacing:-0.75px;-webkit-text-stroke:0.3px #1f2937">SDT</div>
<div class="t" style="left:1923.80px;top:484.64px;font:400 16.3px/16.3px 'Liberation Sans', sans-serif;color:#4b5563;letter-spacing:-0.025px;;-webkit-text-stroke:0.25px #4b5563">QubeSIM-MIMIQ</div>
<div class="r" style="left:2139px;top:463px;width:113px;height:33px;background:#dcfce7;border-radius:17px"></div>
<div class="t" style="left:2155.70px;top:471.31px;font:700 15.4px/15.4px 'Liberation Sans', sans-serif;color:#15803d;letter-spacing:-0.225px;">Completed</div>
<div class="r" style="left:2313px;top:460px;width:46px;height:39px;background:#f9fafb;border:1px solid #e5e7eb;border-radius:4px"></div>
<svg class="r" style="left:2328px;top:472px;" width="16" height="10" viewBox="0 0 16 10"><path d="M1.3 8.5 L8 1.5 L14.7 8.5" fill="none" stroke="#6b7280" stroke-width="2.2"/></svg>
<div class="r" style="left:1640px;top:521px;width:751px;height:1px;background:#e5e7eb"></div>
<div class="t" style="left:1665.20px;top:541.75px;font:400 19px/19px 'Liberation Sans', sans-serif;color:#374151;letter-spacing:0.177px;-webkit-text-stroke:0.2px #374151">Execution Info</div>
<div class="t" style="left:1692.90px;top:591.25px;font:400 19px/19px 'Liberation Sans', sans-serif;color:#374151;letter-spacing:-0.22px;-webkit-text-stroke:0.3px #374151">Job ID</div>
<div class="t" style="left:1692.90px;top:651.65px;font:400 19px/19px 'Liberation Sans', sans-serif;color:#374151;letter-spacing:0.445px;-webkit-text-stroke:0.3px #374151">Submitted At</div>
<div class="t" style="left:1692.90px;top:712.45px;font:400 19px/19px 'Liberation Sans', sans-serif;color:#374151;letter-spacing:0.411px;-webkit-text-stroke:0.3px #374151">Started At</div>
<div class="t" style="left:1692.90px;top:772.85px;font:400 19px/19px 'Liberation Sans', sans-serif;color:#374151;letter-spacing:0.309px;-webkit-text-stroke:0.3px #374151">Completed At</div>
<div class="t" style="left:1692.90px;top:833.45px;font:400 19px/19px 'Liberation Sans', sans-serif;color:#374151;letter-spacing:0.136px;-webkit-text-stroke:0.3px #374151">Credits Used</div>
<div class="t" style="left:1966.50px;top:593.96px;font:400 16.5px/16.5px 'Liberation Mono', monospace;color:#374151;letter-spacing:0.043px;">dfd0a2f4-f273-4045-bf1a-9df4cd35f524</div>
<svg class="r" style="left:2343px;top:592px;" width="15" height="16" viewBox="0 0 15 16"><path d="M1 4 H9 V15 H1 Z" fill="#9ca3af"/><path d="M4 1 H10.5 L13.5 4 V12 H10.5 V3.8 H4 Z" fill="#9ca3af"/></svg>
<div class="t" style="left:1966.30px;top:652.13px;font:700 18.2px/18.2px 'Liberation Sans', sans-serif;color:#374151;letter-spacing:0.541px;">2026-02-05 19:10:15.945</div>
<div class="t" style="left:1966.30px;top:713.03px;font:700 18.2px/18.2px 'Liberation Sans', sans-serif;color:#374151;letter-spacing:0.473px;">2026-02-05 19:10:16.723</div>
<div class="t" style="left:1966.30px;top:773.33px;font:700 18.2px/18.2px 'Liberation Sans', sans-serif;color:#374151;letter-spacing:0.473px;">2026-02-05 19:10:17.440</div>
<div class="t" style="left:1966.30px;top:834.13px;font:700 18.2px/18.2px 'Liberation Sans', sans-serif;color:#374151;">-</div>
<div class="t" style="left:1664.60px;top:910.65px;font:400 19px/19px 'Liberation Sans', sans-serif;color:#374151;letter-spacing:0.27px;-webkit-text-stroke:0.2px #374151">Job Details</div>
<div class="t" style="left:1692.70px;top:959.65px;font:400 19px/19px 'Liberation Sans', sans-serif;color:#374151;letter-spacing:0.285px;-webkit-text-stroke:0.3px #374151">Qubits / Shots</div>
<div class="t" style="left:1966.10px;top:960.33px;font:700 18.2px/18.2px 'Liberation Sans', sans-serif;color:#374151;letter-spacing:0.163px;">2 / 1,000</div>
<div class="t" style="left:1692.70px;top:1020.65px;font:400 19px/19px 'Liberation Sans', sans-serif;color:#374151;letter-spacing:0.117px;-webkit-text-stroke:0.3px #374151">Circuit</div>
<div class="t" style="left:1966.10px;top:1023.16px;font:400 16.5px/16.5px 'Liberation Mono', monospace;color:#1f2937;letter-spacing:0.037px;-webkit-text-stroke:0.15px #1f2937">Copy quantum circuit</div>
<svg class="r" style="left:2183px;top:1021px;" width="15" height="17" viewBox="0 0 15 17"><path d="M1 4 H9 V15 H1 Z" fill="#9ca3af"/><path d="M4 1 H10.5 L13.5 4 V12 H10.5 V3.8 H4 Z" fill="#9ca3af"/></svg>
<div class="t" style="left:1692.70px;top:1080.95px;font:400 19px/19px 'Liberation Sans', sans-serif;color:#374151;letter-spacing:-0.38px;-webkit-text-stroke:0.3px #374151">Result</div>
<div class="r" style="left:1966px;top:1076px;width:125px;height:40px;background:#fff;border:1px solid #d1d5db;border-radius:3px"></div>
<div class="t" style="left:1988.90px;top:1086.30px;font:400 18px/18px 'Liberation Sans', sans-serif;color:#1f2937;letter-spacing:-0.186px;;-webkit-text-stroke:0.25px #1f2937">Download</div>
<div class="r" style="left:1640px;top:1151px;width:751px;height:2px;background:#e5e7eb"></div>
<div class="t" style="left:1662.50px;top:1174.78px;font:400 18.5px/18.5px 'Liberation Sans', sans-serif;color:#1f2937;letter-spacing:-0.058px;-webkit-text-stroke:0.25px #1f2937">2026. 02. 05.</div>
<svg class="r" style="left:1775.2px;top:1173.4px;" width="32" height="19" viewBox="0 0 32 19"><g fill="none" stroke="#1f2937" stroke-width="1.35">
<ellipse cx="7.3" cy="6.6" rx="5.3" ry="3.2"/><path d="M7.3 9.8 V14.5 M0.4 14.5 H14.5"/>
<path d="M22.6 1.6 V4 M16.2 4.1 H29.1 M15.6 12.3 H29.8 M22.6 12.3 V17.5"/><ellipse cx="22.6" cy="8.2" rx="4.3" ry="1.6"/></g></svg>
<div class="t" style="left:1810.40px;top:1174.78px;font:400 18.5px/18.5px 'Liberation Sans', sans-serif;color:#1f2937;letter-spacing:-0.95px;-webkit-text-stroke:0.25px #1f2937">07:10</div>
<div class="t" style="left:1662.50px;top:1203.28px;font:400 14.5px/14.5px 'Liberation Mono', monospace;color:#6b7280;letter-spacing:-1.043px;">392fff53-de4...</div>
<div class="t" style="left:1923.80px;top:1174.72px;font:400 16.8px/16.8px 'Liberation Sans', sans-serif;color:#1f2937;letter-spacing:-0.75px;-webkit-text-stroke:0.3px #1f2937">SDT</div>
<div class="t" style="left:1923.80px;top:1201.44px;font:400 16.3px/16.3px 'Liberation Sans', sans-serif;color:#4b5563;letter-spacing:-0.025px;;-webkit-text-stroke:0.25px #4b5563">QubeSIM-MIMIQ</div>
<div class="r" style="left:2139px;top:1179px;width:113px;height:33px;background:#dcfce7;border-radius:17px"></div>
<div class="t" style="left:2155.70px;top:1187.31px;font:700 15.4px/15.4px 'Liberation Sans', sans-serif;color:#15803d;letter-spacing:-0.225px;">Completed</div>
<div class="r" style="left:2313px;top:1176px;width:46px;height:39px;background:#f9fafb;border:1px solid #e5e7eb;border-radius:4px"></div>
<svg class="r" style="left:2328px;top:1188px;" width="16" height="10" viewBox="0 0 16 10"><path d="M1.3 8.5 L8 1.5 L14.7 8.5" fill="none" stroke="#6b7280" stroke-width="2.2"/></svg>
<div class="r" style="left:2425px;top:39px;width:19px;height:1190px;background:#fafafa"></div>
<svg class="r" style="left:2428px;top:45px;" width="13" height="10" viewBox="0 0 13 10"><path d="M6.5 0.5 L12.5 9.5 H0.5 Z" fill="#8c8c8c" stroke="#8c8c8c" stroke-width="1" stroke-linejoin="round"/></svg>
<div class="r" style="left:2429px;top:62px;width:11px;height:731px;background:#8c8c8c;border-radius:6px"></div>
<svg class="r" style="left:2428px;top:1214px;" width="13" height="10" viewBox="0 0 13 10"><path d="M6.5 9.5 L12.5 0.5 H0.5 Z" fill="#8c8c8c" stroke="#8c8c8c" stroke-width="1" stroke-linejoin="round"/></svg>
<div class="r" style="left:2454px;top:48px;width:97px;height:119px;background:#eff2f8;border-radius:12px"></div>
<div class="r" style="left:2454px;top:71px;width:5px;height:73px;background:#7b6fe0;border-radius:0 3px 3px 0"></div>
<svg class="r" style="left:2488px;top:71px;" width="28" height="28" viewBox="0 0 28 28"><rect x="1.5" y="1.5" width="25" height="25" rx="5" fill="none" stroke="#7b6fe0" stroke-width="2.4"/>
<path d="M6.5 9.2 L8.6 11.3 L12 7.8 M6.5 17.5 L8.6 19.6 L12 16.1" fill="none" stroke="#7b6fe0" stroke-width="2"/>
<path d="M15 9.5 H21.5 M15 18 H21.5" stroke="#7b6fe0" stroke-width="2.2"/></svg>
<div class="t" style="left:2487.00px;top:128.03px;font:400 11.5px/11.5px 'Liberation Sans', sans-serif;color:#7b6fe0;letter-spacing:0.467px;-webkit-text-stroke:0.55px #7b6fe0">JOBS</div>
<svg class="r" style="left:2484px;top:203px;" width="38" height="38" viewBox="0 0 38 38"><rect x="7.5" y="7.5" width="23" height="23" rx="3.5" fill="none" stroke="#6b7280" stroke-width="2.6"/>
<rect x="12.5" y="12.5" width="13" height="13" rx="1.5" fill="#6b7280"/>
<path d="M14 1 V6.5 M19 1 V6.5 M24 1 V6.5 M14 31.5 V37 M19 31.5 V37 M24 31.5 V37 M1 14 H6.5 M1 19 H6.5 M1 24 H6.5 M31.5 14 H37 M31.5 19 H37 M31.5 24 H37" stroke="#6b7280" stroke-width="2"/></svg>
<div class="t" style="left:2466.70px;top:264.93px;font:400 11.5px/11.5px 'Liberation Sans', sans-serif;color:#6b7280;letter-spacing:-0.15px;-webkit-text-stroke:0.5px #6b7280">RESOURCES</div>
<svg class="r" style="left:2489px;top:348px;" width="28" height="23" viewBox="0 0 28 23"><rect x="1.3" y="1.3" width="25.4" height="20.4" rx="1.5" fill="none" stroke="#6b7280" stroke-width="2.6"/>
<path d="M6 7.5 H8.5 M6 13.5 H8.5 M11.5 7.5 H22 M11.5 13.5 H22" stroke="#6b7280" stroke-width="2.6"/></svg>
<div class="t" style="left:2466.00px;top:403.63px;font:400 11.5px/11.5px 'Liberation Sans', sans-serif;color:#6b7280;letter-spacing:-0.125px;-webkit-text-stroke:0.5px #6b7280">WORKSPACE</div>
<svg class="r" style="left:2490px;top:483px;" width="26" height="29" viewBox="0 0 26 29"><path d="M7 1.5 L9.5 4.5 M19 1.5 L16.5 4.5" stroke="#4b5563" stroke-width="2.4"/>
<path d="M13 4 Q20.5 4 20.5 12 V19 Q20.5 28 13 28 Q5.5 28 5.5 19 V12 Q5.5 4 13 4 Z" fill="#4b5563"/>
<path d="M0.5 9.5 H25.5 M0.5 15.2 H25.5 M0.5 21 H25.5" stroke="#4b5563" stroke-width="2.2"/>
<path d="M9.5 12.3 H16.5 M9.5 18.1 H16.5" stroke="#fff" stroke-width="2.2"/></svg>
<div class="t" style="left:2470.50px;top:540.52px;font:400 11.5px/11.5px 'Liberation Sans', sans-serif;color:#6b7280;letter-spacing:-0.357px;-webkit-text-stroke:0.5px #6b7280">DEBUGGER</div>
<svg class="r" style="left:2244px;top:12px;" width="18" height="14" viewBox="0 0 18 14"><circle cx="9" cy="3.5" r="2.8" fill="#6b7280"/><circle cx="3.5" cy="5" r="2" fill="#6b7280"/><circle cx="14.5" cy="5" r="2" fill="#6b7280"/>
<path d="M4.5 13 Q4.5 7.5 9 7.5 Q13.5 7.5 13.5 13 Z" fill="#6b7280"/><path d="M0.5 11.5 Q0.5 8 3.5 8 Q4.6 8 5.2 8.5 Q4 10 3.8 11.5 Z M17.5 11.5 Q17.5 8 14.5 8 Q13.4 8 12.8 8.5 Q14 10 14.2 11.5 Z" fill="#6b7280"/></svg>
<svg class="r" style="left:2396px;top:10px;" width="18" height="18" viewBox="0 0 18 18"><ellipse cx="12" cy="3.6" rx="5" ry="2" fill="#6b7280"/><path d="M7 4.5 V8.5 Q12 11 17 8.5 V4.5 Q12 7 7 4.5 Z" fill="#6b7280"/>
<ellipse cx="6.5" cy="9.5" rx="5.5" ry="2.3" fill="#6b7280" stroke="#fff" stroke-width="0.8"/><path d="M1 10.5 V15 Q6.5 18 12 15 V10.5 Q6.5 13.5 1 10.5 Z" fill="#6b7280"/><path d="M1 13 Q6.5 16 12 13" stroke="#fff" stroke-width="0.8" fill="none"/></svg>
</body></html>
